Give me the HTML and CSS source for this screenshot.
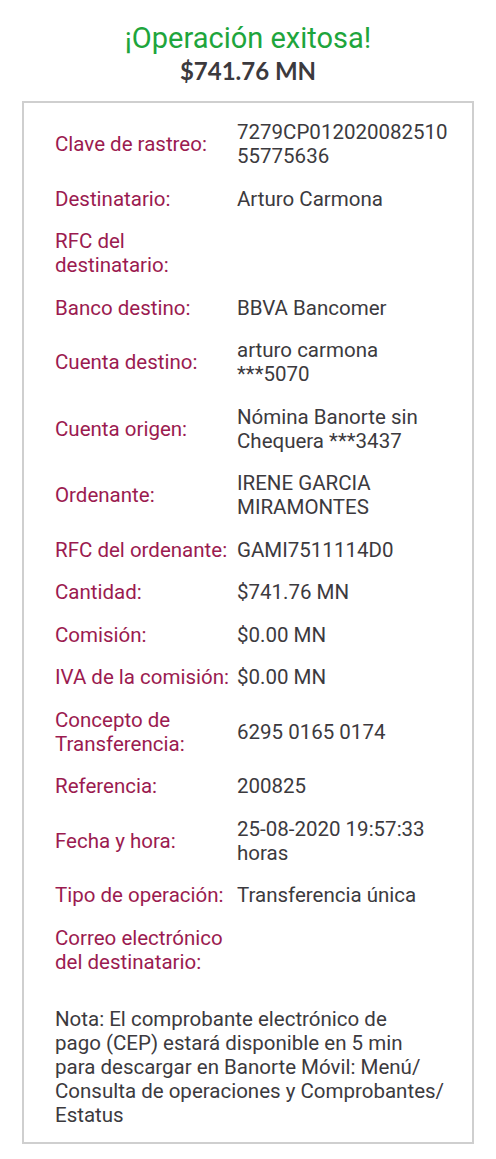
FILE: index.html
```html
<!DOCTYPE html>
<html lang="es">
<head>
<meta charset="utf-8">
<title>Operación exitosa</title>
<link rel="stylesheet" href="styles.css">
</head>
<body>
<header class="head">
  <h1 class="title">¡Operación exitosa!</h1>
  <p class="amount">$741.76 MN</p>
</header>
<section class="card">
  <dl class="rows">
    <div class="row"><dt>Clave de rastreo:</dt><dd class="brk">7279CP01202008251055775636</dd></div>
    <div class="row"><dt>Destinatario:</dt><dd>Arturo Carmona</dd></div>
    <div class="row"><dt>RFC del<br>destinatario:</dt><dd></dd></div>
    <div class="row"><dt>Banco destino:</dt><dd>BBVA Bancomer</dd></div>
    <div class="row"><dt>Cuenta destino:</dt><dd>arturo carmona ***5070</dd></div>
    <div class="row"><dt>Cuenta origen:</dt><dd>Nómina Banorte sin Chequera ***3437</dd></div>
    <div class="row"><dt>Ordenante:</dt><dd>IRENE GARCIA MIRAMONTES</dd></div>
    <div class="row"><dt>RFC del ordenante:</dt><dd>GAMI7511114D0</dd></div>
    <div class="row"><dt>Cantidad:</dt><dd>$741.76 MN</dd></div>
    <div class="row"><dt>Comisión:</dt><dd>$0.00 MN</dd></div>
    <div class="row"><dt>IVA de la comisión:</dt><dd>$0.00 MN</dd></div>
    <div class="row"><dt>Concepto de<br>Transferencia:</dt><dd>6295 0165 0174</dd></div>
    <div class="row"><dt>Referencia:</dt><dd>200825</dd></div>
    <div class="row"><dt>Fecha y hora:</dt><dd>25-08-2020 19:57:33 horas</dd></div>
    <div class="row"><dt>Tipo de operación:</dt><dd>Transferencia única</dd></div>
    <div class="row"><dt>Correo electrónico<br>del destinatario:</dt><dd></dd></div>
  </dl>
  <p class="note">Nota: El comprobante electrónico de<br>pago (CEP) estará disponible en 5 min<br>para descargar en Banorte Móvil: Menú/<br>Consulta de operaciones y Comprobantes/<br>Estatus</p>
</section>
</body>
</html>
```

FILE: styles.css
```css
html, body {
  margin: 0;
  padding: 0;
  background: #ffffff;
}
body {
  font-family: Roboto, "Liberation Sans", sans-serif;
  color: #3c3a3e;
  padding: 0 22px 16px;
}
.head {
  display: flex;
  flex-direction: column;
  align-items: center;
  padding-top: 20px;
  padding-bottom: 16px;
}
.title {
  margin: 0;
  font-size: 29px;
  line-height: 36px;
  font-weight: 400;
  color: #1ea53c;
}
.amount {
  margin: 0;
  font-family: Lato, "Open Sans", sans-serif;
  font-weight: 700;
  font-size: 24px;
  line-height: 29px;
  color: #3c3a3e;
}
.card {
  border: 2px solid #cfcfcf;
  padding: 17px 18px 15px 31px;
}
.rows {
  margin: 0;
  display: flex;
  flex-direction: column;
  gap: 18.5px;
}
.row {
  display: grid;
  grid-template-columns: 182px 215px;
  align-items: center;
  font-size: 20.5px;
  line-height: 24px;
}
.row dt {
  color: #9b1b50;
}
.row dd {
  margin: 0;
  color: #3c3a3e;
}
.row dd.brk {
  word-break: break-all;
}
.note {
  margin: 33px 0 0;
  font-size: 20.5px;
  line-height: 24px;
  color: #3c3a3e;
}
```
